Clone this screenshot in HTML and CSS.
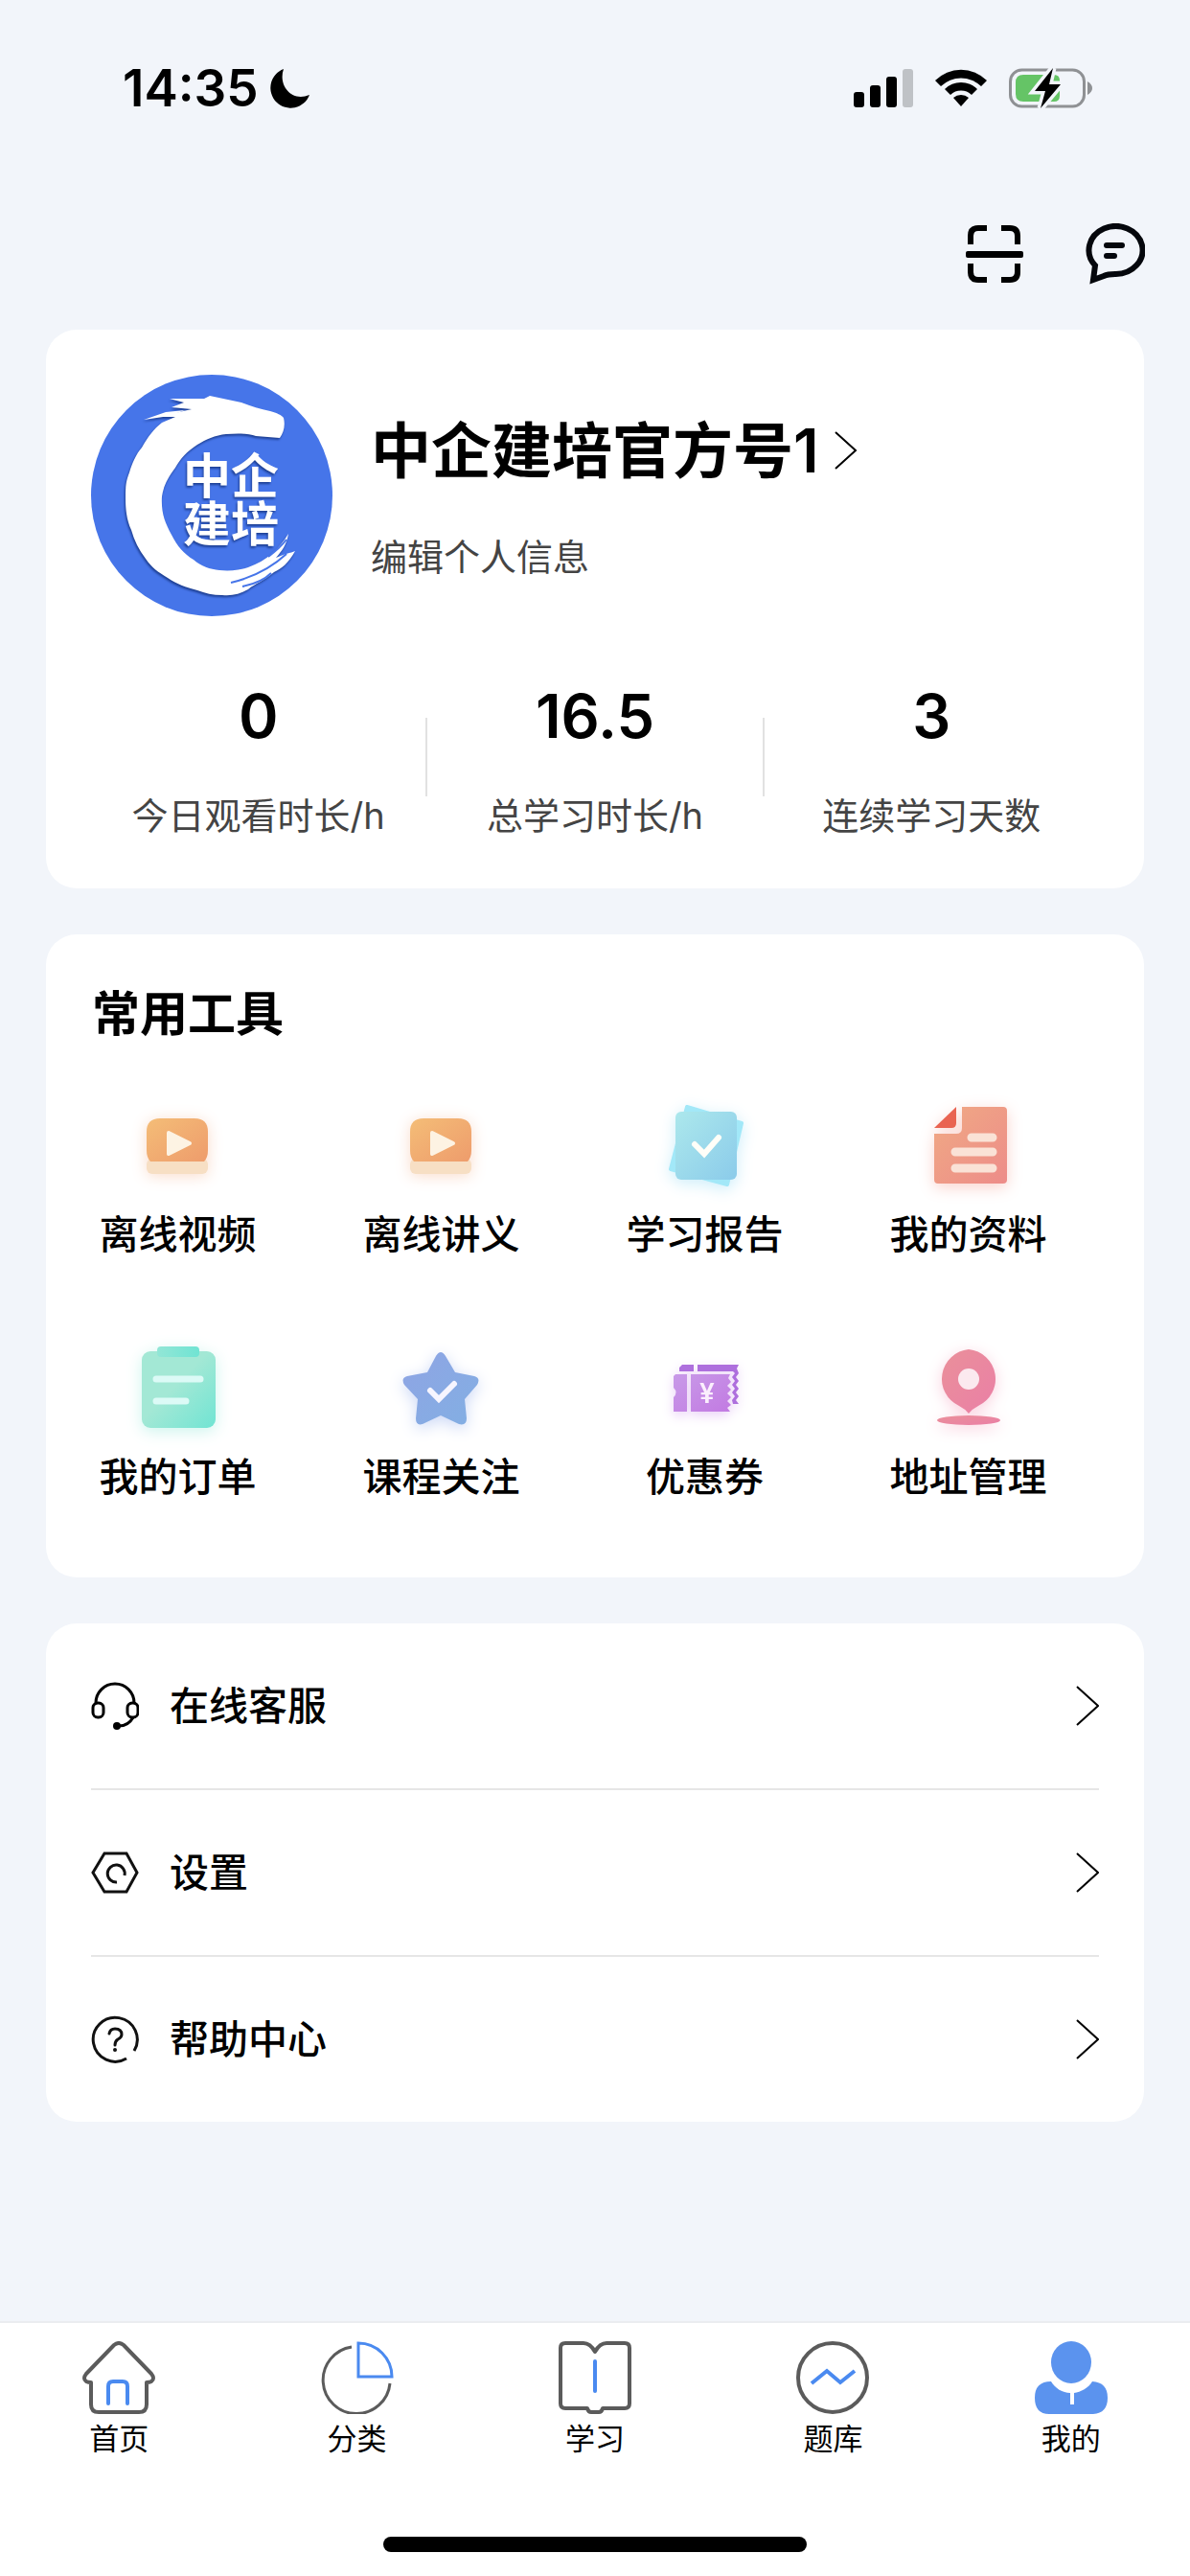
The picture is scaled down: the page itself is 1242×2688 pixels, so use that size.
FILE: index.html
```html
<!DOCTYPE html>
<html lang="zh-CN">
<head>
  <meta charset="UTF-8" />
  <meta name="viewport" content="width=device-width, initial-scale=1.0"/>
  <title>我的</title>
  <link rel="stylesheet" href="styles.css">
</head>
<body>
  <div class="status-bar">
    <div class="status-time">
      <span>14:35</span>
      <svg width="42" height="42" viewBox="0 0 42 42"><path d="M14 1C8 18 22 36 41 28A21 21 0 1 1 14 1Z"/></svg>
    </div>
    <div class="status-icons">
      <svg width="62" height="42" viewBox="0 0 62 42">
        <rect x="0" y="25" width="11" height="16" rx="3"/>
        <rect x="17" y="18" width="11" height="23" rx="3"/>
        <rect x="34" y="9" width="11" height="32" rx="3"/>
        <rect x="51" y="1" width="11" height="40" rx="3" fill="#bfc2c6"/>
      </svg>
      <svg width="54" height="42" viewBox="0 0 54 42">
        <path d="M0 13A38 38 0 0 1 54 13L48 19A30 30 0 0 0 6 19Z"/>
        <path d="M10 22A24 24 0 0 1 44 22L38 28A16 16 0 0 0 16 28Z"/>
        <path d="M19 31A12 12 0 0 1 35 31L27 40Z"/>
      </svg>
      <svg width="87" height="42" viewBox="0 0 87 42">
        <rect x="1.5" y="2" width="77" height="38" rx="12" fill="none" stroke="#8f9194" stroke-width="3"/>
        <path d="M82 14Q87 17 87 21T82 28Z" fill="#8f9194"/>
        <path d="M15 7H47Q53 7 53 13V29Q53 35 47 35H15Q7 35 7 27V15Q7 7 15 7Z" fill="#65c466"/>
        <path d="M46 0L27 24H38L33 42L54 17H42Z" stroke="#f2f5fa" stroke-width="7" paint-order="stroke"/>
      </svg>
    </div>
  </div>

  <div class="top-actions">
    <button type="button" class="icon-btn" aria-label="扫一扫">
      <svg width="64" height="64" viewBox="0 0 64 64" fill="none" stroke="#000" stroke-width="6">
        <path d="M8 22V13Q8 5 16 5H25M40 5H49Q57 5 57 13V22M8 42V51Q8 59 16 59H25M40 59H49Q57 59 57 51V42"/>
        <rect x="3" y="29" width="60" height="7" rx="2" fill="#000" stroke="none"/>
      </svg>
    </button>
    <button type="button" class="icon-btn" aria-label="消息">
      <svg width="64" height="64" viewBox="0 0 64 64" fill="none" stroke="#05070c" stroke-width="6">
        <path d="M10 59L12 44A28 25 0 1 1 33 53Q25 53 21 55Z"/>
        <path d="M24 23H40M24 34H32" stroke-linecap="round"/>
      </svg>
    </button>
  </div>

  <main class="content">
    <section class="card profile">
      <div class="profile-head">
        <svg class="avatar" viewBox="0 0 253 253" role="img" aria-label="头像">
          <circle cx="126" cy="126" r="126" fill="#4675e9"/>
          <g class="avatar-ink">
            <path d="M201 45C203 53 201 61 197 66L172 64C165 61 152 61 141 62C130 63 119 68 111 73C100 80 93 88 88 97C80 108 76 115 74 127C73 144 77 154 84 167C90 179 97 187 107 193C115 200 124 203 134 204C145 205 155 204 164 201C184 194 197 181 206 166C204 178 199 184 193 191C202 187 208 186 213 184C206 197 199 202 191 206C181 215 171 218 164 224C155 229 147 231 137 230C127 230 119 228 111 225C99 222 89 218 80 212C70 206 63 201 57 192C50 183 45 173 42 162C37 151 36 140 36 129C36 118 36 112 40 102C43 92 47 83 53 76C59 65 66 56 74 50L88 44L70 44L105 36L84 34L97 29L82 25L118 25L124 22L157 29C167 33 177 36 187 38C194 40 199 42 201 45Z"/>
            <path d="M55 47L78 39L98 37L82 43Z"/>
          </g>
          <path d="M146 217Q180 209 204 187M158 221Q178 217 188 207M185 190Q197 181 204 172" fill="none" stroke="#4675e9" stroke-width="2"/>
          <text class="avatar-ink avatar-text">
            <tspan x="96" y="124">中企</tspan>
            <tspan x="96" y="174">建培</tspan>
          </text>
        </svg>
        <div class="profile-info">
          <a href="#" class="profile-name">
            <span>中企建培官方号1</span>
            <svg width="24" height="40" viewBox="0 0 24 40" fill="none" stroke="#000" stroke-width="2"><path d="M1 1L22 20L1 39"/></svg>
          </a>
          <a href="#" class="profile-edit">编辑个人信息</a>
        </div>
      </div>
      <div class="stats">
        <div class="stat">
          <strong>0</strong>
          <span>今日观看时长/h</span>
        </div>
        <i class="divider"></i>
        <div class="stat">
          <strong>16.5</strong>
          <span>总学习时长/h</span>
        </div>
        <i class="divider"></i>
        <div class="stat">
          <strong>3</strong>
          <span>连续学习天数</span>
        </div>
      </div>
    </section>

    <section class="card tools">
      <h2>常用工具</h2>
      <div class="tool-grid">
        <a href="#" class="tool">
          <svg class="glow-orange" viewBox="0 0 120 120">
            <defs>
              <linearGradient id="orange" x1="0" y1="0" x2="1" y2="1"><stop offset="0" stop-color="#f4bd77"/><stop offset="1" stop-color="#ee9c6c"/></linearGradient>
            </defs>
            <rect x="27" y="75" width="64" height="16" rx="6" fill="#f7dfc4"/>
            <path d="M41 33H77Q91 33 91 47V66Q91 74 87 78H31Q27 74 27 66V47Q27 33 41 33Z" fill="url(#orange)"/>
            <path d="M50 48L72 59L50 70Z" fill="#fdf3e3" stroke="#fdf3e3" stroke-width="4" stroke-linejoin="round"/>
          </svg>
          <span>离线视频</span>
        </a>
        <a href="#" class="tool">
          <svg class="glow-orange" viewBox="0 0 120 120">
            <rect x="27" y="75" width="64" height="16" rx="6" fill="#f7dfc4"/>
            <path d="M41 33H77Q91 33 91 47V66Q91 74 87 78H31Q27 74 27 66V47Q27 33 41 33Z" fill="url(#orange)"/>
            <path d="M50 48L72 59L50 70Z" fill="#fdf3e3" stroke="#fdf3e3" stroke-width="4" stroke-linejoin="round"/>
          </svg>
          <span>离线讲义</span>
        </a>
        <a href="#" class="tool">
          <svg class="glow-cyan" viewBox="0 0 120 120">
            <defs>
              <linearGradient id="cyan" x1="0" y1="0" x2="1" y2="1"><stop offset="0" stop-color="#ace8ec"/><stop offset="1" stop-color="#8bcbea"/></linearGradient>
            </defs>
            <path d="M41 21L98 38L83 102L24 86Z" fill="#a2e8f8" stroke="#a2e8f8" stroke-width="4" stroke-linejoin="round"/>
            <rect x="29" y="26" width="64" height="71" rx="6" fill="url(#cyan)"/>
            <path d="M49 60L59 70L74 53" fill="none" stroke="#fffef8" stroke-width="6" stroke-linecap="round"/>
          </svg>
          <span>学习报告</span>
        </a>
        <a href="#" class="tool">
          <svg class="glow-coral" viewBox="0 0 120 120">
            <defs>
              <linearGradient id="coral" x1="0" y1="0" x2="1" y2="1"><stop offset="0" stop-color="#f0aa84"/><stop offset="1" stop-color="#ed8c89"/></linearGradient>
            </defs>
            <path d="M53 21H96Q100 21 100 25V97Q100 101 96 101H28Q24 101 24 97V49H47Q53 49 53 43Z" fill="url(#coral)"/>
            <path d="M47 21V38Q47 43 42 43H24Z" fill="#e96452"/>
            <path d="M63 53H85M46 68H85M46 85H85" stroke="#fae2d6" stroke-width="9" stroke-linecap="round"/>
          </svg>
          <span>我的资料</span>
        </a>
        <a href="#" class="tool">
          <svg class="glow-green" viewBox="0 0 120 120">
            <defs>
              <linearGradient id="green" x1="0" y1="0" x2="1" y2="1"><stop offset=".45" stop-color="#a3e8d5"/><stop offset="1" stop-color="#70e4d3"/></linearGradient>
              <linearGradient id="clip"><stop offset="0" stop-color="#92e6d6"/><stop offset="1" stop-color="#70e4d3"/></linearGradient>
            </defs>
            <rect x="22" y="23" width="77" height="80" rx="9" fill="url(#green)"/>
            <rect x="38" y="18" width="44" height="11" rx="4" fill="url(#clip)"/>
            <path d="M37 52H83M37 75H68" stroke="#dcfaf6" stroke-width="7" stroke-linecap="round"/>
          </svg>
          <span>我的订单</span>
        </a>
        <a href="#" class="tool">
          <svg class="glow-blue" viewBox="0 0 120 120">
            <defs>
              <linearGradient id="blue" x1="0" y1="0" x2="1" y2="1"><stop offset="0" stop-color="#8fa4e4"/><stop offset="1" stop-color="#82afe3"/></linearGradient>
            </defs>
            <path d="M54 28Q59 20 64 28L74 45L94 49Q101 51 97 58L84 73L86 93Q86 101 78 99L59 90L40 99Q33 101 33 93L35 73L21 58Q17 51 24 49L45 45Z" fill="url(#blue)"/>
            <path d="M48 64L57 73L73 57" fill="none" stroke="#f6f5ff" stroke-width="6" stroke-linecap="round"/>
          </svg>
          <span>课程关注</span>
        </a>
        <a href="#" class="tool">
          <svg class="glow-purple" viewBox="0 0 120 120">
            <defs>
              <linearGradient id="purple" x1="0" y1="0" x2="1" y2="1"><stop offset="0" stop-color="#c89ae8"/><stop offset="1" stop-color="#c27ae2"/></linearGradient>
            </defs>
            <path d="M36 37H48V44H33V40ZM52 37H95L93 41L95 46L92 50L95 54L92 58L95 62L92 66L95 70L92 74L95 78H89L88 74L91 70L88 66L91 62L88 58L91 54L88 50L91 46L89 44H52Z" fill="#ae6fdd"/>
            <path d="M29 47H41V86H27V71Q32 66 27 61V49ZM45 47H86L84 51L87 55L83 59L87 63L83 67L87 71L83 75L87 79L83 82L86 86H45Z" fill="url(#purple)"/>
            <text x="62" y="77" class="yen">¥</text>
          </svg>
          <span>优惠券</span>
        </a>
        <a href="#" class="tool">
          <svg class="glow-pink" viewBox="0 0 120 120">
            <defs>
              <linearGradient id="pink" x1="0" y1="0" x2="1" y2="1"><stop offset="0" stop-color="#ea909a"/><stop offset="1" stop-color="#ea7fa6"/></linearGradient>
            </defs>
            <path d="M60 21A31 31 0 0 1 70 80Q64 83 60 88Q56 83 50 80A31 31 0 0 1 60 21Z" fill="url(#pink)"/>
            <circle cx="60" cy="52" r="11" fill="#fbe9ef"/>
            <ellipse cx="60" cy="95" rx="33" ry="5" fill="url(#pink)"/>
          </svg>
          <span>地址管理</span>
        </a>
      </div>
    </section>

    <section class="card menu">
      <a href="#" class="menu-row">
        <svg width="50" height="50" viewBox="0 0 50 50" fill="none" stroke="#000" stroke-width="3">
          <path d="M5 22A20 20 0 0 1 45 22M44 37Q39 46 29 46"/>
          <rect x="2" y="22" width="11" height="15" rx="5"/>
          <rect x="38" y="22" width="11" height="15" rx="5"/>
          <circle cx="27" cy="46" r="4" fill="#000" stroke="none"/>
        </svg>
        <span>在线客服</span>
        <svg class="arrow" width="24" height="42" viewBox="0 0 24 42" fill="none" stroke="#000" stroke-width="2"><path d="M1 1L23 21L1 41"/></svg>
      </a>
      <a href="#" class="menu-row">
        <svg width="50" height="50" viewBox="0 0 50 50" fill="none" stroke="#111" stroke-width="3">
          <path d="M14 5H37L48 25L37 45H14L2 25Z"/>
          <path d="M35 28A9 9 0 1 0 27 35"/>
        </svg>
        <span>设置</span>
        <svg class="arrow" width="24" height="42" viewBox="0 0 24 42" fill="none" stroke="#000" stroke-width="2"><path d="M1 1L23 21L1 41"/></svg>
      </a>
      <a href="#" class="menu-row">
        <svg width="50" height="50" viewBox="0 0 50 50" fill="none" stroke="#111" stroke-width="3">
          <path d="M45 37A23 23 0 1 0 37 45"/>
          <path d="M19 19Q20 14 25 14Q32 14 32 20Q32 23 28 25Q25 27 25 31" stroke-linecap="round"/>
          <circle cx="25" cy="36" r="2" fill="#111" stroke="none"/>
        </svg>
        <span>帮助中心</span>
        <svg class="arrow" width="24" height="42" viewBox="0 0 24 42" fill="none" stroke="#000" stroke-width="2"><path d="M1 1L23 21L1 41"/></svg>
      </a>
    </section>
  </main>

  <footer class="bottom">
    <nav class="tabs">
      <a href="#" class="tab">
        <svg width="76" height="76" viewBox="0 0 76 76" fill="none" stroke="#5b5b5b" stroke-width="4" stroke-linejoin="round">
          <path d="M33 4Q38 0 43 4L72 34Q76 39 72 42Q70 43 67 43V66Q67 74 59 74H17Q9 74 9 66V43Q6 43 4 42Q0 39 4 34Z"/>
          <path d="M27 65V47Q27 42 32 42H42Q47 42 47 47V65" stroke="#4a8af0" stroke-linecap="round"/>
        </svg>
        <span>首页</span>
      </a>
      <a href="#" class="tab">
        <svg width="76" height="76" viewBox="0 0 76 76" fill="none" stroke="#5b5b5b" stroke-width="3">
          <path d="M32 6A35 35 0 1 0 72 44"/>
          <path d="M39 2A35 35 0 0 1 74 37H39Z" stroke="#4a8af0"/>
        </svg>
        <span>分类</span>
      </a>
      <a href="#" class="tab">
        <svg width="76" height="76" viewBox="0 0 76 76" fill="none" stroke="#5b5b5b" stroke-width="4" stroke-linejoin="round">
          <path d="M38 11Q33 2 26 2H7Q2 2 2 7V65Q2 70 7 70H30Q31 74 34 74H42Q45 74 46 70H69Q74 70 74 65V7Q74 2 69 2H50Q43 2 38 11Z"/>
          <path d="M38 21V52" stroke="#4a8af0" stroke-linecap="round"/>
        </svg>
        <span>学习</span>
      </a>
      <a href="#" class="tab">
        <svg width="76" height="76" viewBox="0 0 76 76" fill="none" stroke="#5b5b5b" stroke-width="4">
          <circle cx="38" cy="38" r="36"/>
          <path d="M16 44L32 31L46 43L61 31" stroke="#4a8af0"/>
        </svg>
        <span>题库</span>
      </a>
      <a href="#" class="tab">
        <svg width="76" height="76" viewBox="0 0 76 76" fill="#5b93ee">
          <ellipse cx="38" cy="22" rx="21" ry="22"/>
          <path d="M17 42C21 49 29 54 37 54V66H41V54C48 53 56 49 60 42Q76 43 76 59T61 76H15Q0 76 0 59T17 42Z"/>
        </svg>
        <span>我的</span>
      </a>
    </nav>
    <div class="home-indicator"></div>
  </footer>
</body>
</html>
```

FILE: styles.css
```css
* {
  box-sizing: border-box;
}
body {
  margin: 0;
  min-height: 100vh;
  display: flex;
  flex-direction: column;
  background-color: #f2f5fa;
  color: #000;
  font-family: Inter, "Noto Sans CJK SC", sans-serif;
}
svg {
  display: block;
  flex-shrink: 0;
}
a {
  color: inherit;
  text-decoration: none;
}

/* status bar */
.status-bar {
  display: flex;
  justify-content: space-between;
  align-items: center;
  padding: 60px 102px 8px 128px;
}
.status-time {
  display: flex;
  align-items: center;
  gap: 12px;
  font-size: 53px;
  font-weight: 600;
  line-height: 64px;
}
.status-icons {
  display: flex;
  align-items: center;
  gap: 23px;
}
.top-actions {
  display: flex;
  justify-content: flex-end;
  gap: 62px;
  padding: 101px 47px 47px;
}
.icon-btn {
  padding: 0;
  border: none;
  background: none;
  cursor: pointer;
}

.content {
  flex: 1;
  display: flex;
  flex-direction: column;
  gap: 48px;
  padding: 0 48px 48px;
}
.card {
  background: #fff;
  border-radius: 32px;
}

.profile {
  padding: 47px 47px 52px;
}
.profile-head {
  display: flex;
  align-items: center;
  gap: 39px;
}
.avatar {
  width: 253px;
  height: 253px;
}
.avatar-ink {
  fill: #fff;
  filter: drop-shadow(-1px 2px 1px #1d3f93);
}
.avatar-text {
  font-family: "Noto Sans CJK SC", sans-serif;
  font-size: 50px;
  font-weight: 700;
}
.profile-info {
  display: flex;
  flex-direction: column;
  gap: 47px;
}
.profile-name {
  display: flex;
  align-items: center;
  gap: 16px;
  font-size: 63px;
  font-weight: 600;
  line-height: 80px;
}
.profile-edit {
  color: #444;
  font-size: 38px;
  line-height: 48px;
}
.stats {
  display: flex;
  align-items: flex-start;
  margin-top: 71px;
}
.stat {
  flex: 1;
  display: flex;
  flex-direction: column;
  align-items: center;
  gap: 48px;
}
.stat strong {
  font-size: 63px;
  font-weight: 600;
  line-height: 64px;
}
.stat span {
  color: #444;
  font-size: 38px;
  line-height: 48px;
}
.divider {
  width: 2px;
  height: 82px;
  margin-top: 34px;
  background: #e2e2e2;
}

.tools {
  padding: 51px 0 81px;
}
.tools h2 {
  margin: 0 0 44px;
  padding: 0 48px;
  font-size: 50px;
  font-weight: 600;
  line-height: 64px;
}
.tool-grid {
  display: grid;
  grid-template-columns: repeat(4, 1fr);
  row-gap: 75px;
  padding-right: 46px;
}
.tool {
  display: flex;
  flex-direction: column;
  align-items: center;
  gap: 10px;
  font-size: 41px;
  font-weight: 500;
  line-height: 48px;
}
.tool svg {
  width: 120px;
  height: 120px;
}
.yen {
  fill: #fbeffd;
  font-size: 28px;
  font-weight: 600;
  text-anchor: middle;
}
.glow-orange {
  filter: drop-shadow(0 2px 8px #fadccb);
}
.glow-cyan {
  filter: drop-shadow(0 4px 8px #cdeefa);
}
.glow-coral {
  filter: drop-shadow(0 4px 8px #fad3cd);
}
.glow-green {
  filter: drop-shadow(0 4px 8px #cdf5ee);
}
.glow-blue {
  filter: drop-shadow(0 4px 8px #ccd8f6);
}
.glow-purple {
  filter: drop-shadow(0 4px 6px #ead2f7);
}
.glow-pink {
  filter: drop-shadow(0 4px 8px #fad0de);
}

.menu {
  padding: 0 47px;
}
.menu-row {
  display: flex;
  align-items: center;
  gap: 32px;
  padding: 61px 0;
  border-bottom: 2px solid #e6e6e6;
  font-size: 41px;
  font-weight: 500;
  line-height: 48px;
}
.menu-row:last-child {
  border-bottom: none;
}
.arrow {
  margin-left: auto;
}

.bottom {
  background: #fff;
  border-top: 2px solid #ebedf0;
  padding: 19px 0 25px;
}
.tabs {
  display: flex;
}
.tab {
  flex: 1;
  display: flex;
  flex-direction: column;
  align-items: center;
  gap: 6px;
  font-size: 31px;
  line-height: 40px;
}
.home-indicator {
  width: 442px;
  max-width: 60%;
  height: 16px;
  margin: 82px auto 0;
  border-radius: 8px;
  background: #000;
}
```
